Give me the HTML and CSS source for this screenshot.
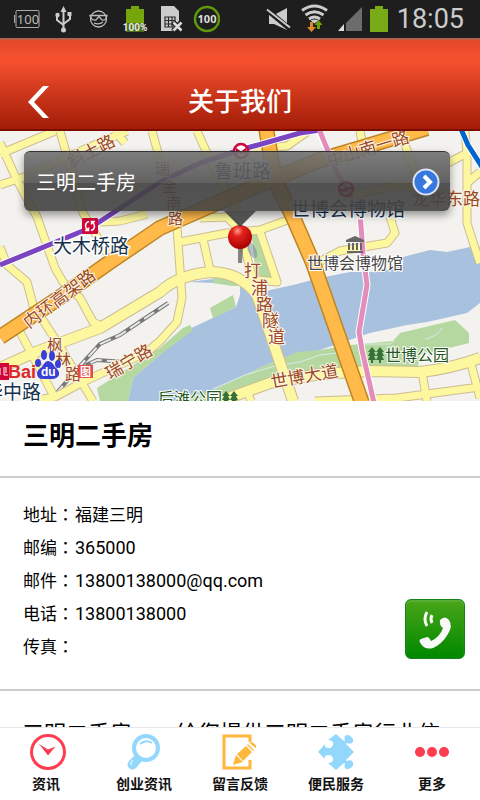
FILE: index.html
```html
<!DOCTYPE html>
<html lang="zh-CN">
<head>
<meta charset="utf-8">
<meta name="viewport" content="width=device-width, initial-scale=1">
<title>关于我们</title>
<link rel="stylesheet" href="styles.css">
</head>
<body>

<div class="status">
    <svg class="status-icons" width="212" height="38" viewBox="8 0 212 38">
        <g fill="none" stroke="#aaa">
            <rect x="16" y="10.500" width="23" height="17" rx="1"/>
            <path d="M14.500 15v8"/>
        </g>
        <text x="28" y="24" class="st-num" font-size="13" fill="#bbb">100</text>
        <g stroke="#ccc" stroke-width="2" fill="none">
            <path d="M63.500 10v21M57 16v4l6.500 5M70 15v4l-6.500 5"/>
        </g>
        <g fill="#ccc"><path d="M63.500 6l-3 6h6z"/><circle cx="63.500" cy="30" r="2.500"/><circle cx="57.500" cy="15" r="2.200"/><path d="M67.500 12h4v4h-4z"/></g>
        <g fill="none" stroke="#bbb" stroke-width="1.300">
            <circle cx="98.500" cy="19" r="8"/>
            <path d="M90 15.500h17l-1 3q-1 2-4 1.500l-3-3.500-3 3.500q-4 .5-5-2zM94 23q5 2 9-1"/>
        </g>
        <path d="M126 9h5V6h8v3h5v23h-18z" fill="#76a60b"/>
        <path d="M126 23h18v9h-18z" fill="#4c6c14"/>
        <text x="135" y="31" class="st-num narrow" font-size="10" font-weight="bold" fill="#e8e8e8">100%</text>
        <path d="M161 6h13l5 5v10l-4 4 2 6h-16z" fill="#ccc"/>
        <path d="M165 17h10v10h-10zM168.500 17v10M172 17v10M165 20.500h10M165 24h10" fill="none" stroke="#292929" stroke-width="1.200"/>
        <path d="M173 22l9 9M182 22l-9 9" stroke="#222" stroke-width="5"/>
        <path d="M173.500 22.500l8 8M181.500 22.500l-8 8" stroke="#ddd" stroke-width="2.500"/>
        <circle cx="207" cy="19" r="12" fill="none" stroke="#5f990a" stroke-width="2.500"/>
        <text x="207" y="23" class="st-num" font-size="11" font-weight="bold" fill="#ddd">100</text>
    </svg>
    <svg class="status-icons" width="126" height="38" viewBox="266 0 126 38">
        <path d="M270 15h5l13-7v22l-13-6h-5z" fill="#ccc"/>
        <path d="M267 9l24 20" stroke="#1e1e1e" stroke-width="5"/>
        <path d="M268 9.500l23 18" stroke="#ccc" stroke-width="2"/>
        <g fill="none" stroke="#ccc" stroke-width="3"><path d="M303 10.500q12.500-9 25 0M306.500 15q9-6.500 18 0M310 19q5.500-4 11 0"/></g>
        <path d="M311.500 20.500q4-2 8 0l-4 3z" fill="#ccc"/>
        <path d="M311 22h3v5h3l-4.500 5-4.500-5h3z" fill="#dd8b28"/>
        <path d="M319.500 20l4 5H321v4h-3v-4h-2.500z" fill="#69a20a"/>
        <path d="M339 31l6-7v7z" fill="#ddd"/>
        <path d="M347 31V23l16-16v24z" fill="#6c6c6c"/>
        <path d="M371 9h5V6h8v3h5v23h-18z" fill="#79ab17"/>
    </svg>
    <time class="clock">18:05</time>
</div>

<header class="header">
    <button class="back" aria-label="返回">
        <svg width="24" height="34" viewBox="0 0 24 34"><path d="M17 1h6L8 17l15 16h-6L2 17z" fill="#fff"/></svg>
    </button>
    <h1>关于我们</h1>
</header>

<main>
<section class="map">
    <svg class="map-canvas" viewBox="0 131 480 270" preserveAspectRatio="xMidYMid slice">
        <defs>
            <radialGradient id="pin" cx=".4" cy=".25" r=".75">
                <stop offset="0" stop-color="#ff9a90"/><stop offset=".3" stop-color="#e5221c"/><stop offset="1" stop-color="#a60000"/>
            </radialGradient>
            <!-- ordinary streets, drawn twice: edge then fill -->
            <g id="streets">
                <path d="M0 154L55 131M0 185L27 176L83 150L127 131M0 143L17 180L37 217L55 268L63 282L80 298L93 322L105 328"/>
                <path d="M0 247L7 265L27 282L33 305L57 342L93 401M20 332L55 398M60 131L83 213L107 253M100 222L120 221L147 214M115 131L125 143M152 131L160 160"/>
                <path d="M197 131L210 160L237 210M307 132L287 146L247 150M170 190L177 227L182 298L177 322L160 341L147 352L83 382L55 397L30 401"/>
                <path d="M180 242L227 233L260 230L293 218M203 239L210 270M260 232L273 270L277 282L257 280M200 218L227 217L240 230L257 295"/>
                <path d="M360 131L363 147M400 131L417 177M315 264L340 251L387 243L395 233L390 217M340 197L400 185L450 195"/>
                <path d="M465 131L467 153L467 223L474 245L480 263M448 163L467 153M467 183L480 172M422 372L427 401M470 360L480 398M315 401L397 398L480 387M248 393L251 401"/>
            </g>
            <g id="avenues">
                <path d="M0 368L33 353L100 328L160 292Q178 275 210 272Q240 272 257 295L273 342L293 401"/>
                <path d="M220 401L270 383L320 374L370 371L420 372Q450 369 480 358"/>
            </g>
            <g id="highway">
                <path d="M0 337L53 302L110 262L160 228L247 190L320 160L427 128"/>
                <path d="M266 128L275 180L293 217L313 263L362 403"/>
            </g>
        </defs>
        <rect x="0" y="131" width="480" height="270" fill="#f3f2ef"/>
        <path fill="#a8c1df" d="M188 282L213 283L240 285L240 295L236 307L183 332L160 355L133 378L128 401H190L213 390L273 362L320 350L370 333L407 325L427 322L467 313L480 303V247H470L447 252L430 250L403 257V265L380 272H350L320 278L293 285L270 290L253 298L240 285L213 279Z"/>
        <g fill="#b5d8a0">
            <path d="M160 348L97 388L100 401H128L133 378L160 355L193 330L190 325L183 328Z"/>
            <path d="M213 272L235 276L248 286L232 286L213 283ZM210 308L233 295L236 307L213 318ZM251 230L257 233L271 278L257 284Z"/>
            <path d="M190 398L213 390L273 362L297 352L320 350L350 345L393 341L400 333L455 320L469 333V343L420 355L418 367L340 372L270 382L235 393L228 401H190Z"/>
        </g>
        <path d="M213 389L245 375L275 366L300 362L320 355L345 352M364 344H390L394 341M425 339Q438 336 442 328" fill="none" stroke="#dbe9ec"/>
        <path d="M55 395L78 368L100 344L120 335L168 303M75 370L97 360L125 362" fill="none" stroke="#777" stroke-width="4"/>
        <path d="M55 395L78 368L100 344L120 335L168 303M75 370L97 360L125 362" fill="none" stroke="#e8e8e8" stroke-width="2" stroke-dasharray="12 5"/>
        <use href="#streets" class="street-edge"/>
        <use href="#avenues" class="avenue-edge"/>
        <use href="#streets" class="street"/>
        <use href="#avenues" class="avenue"/>
        <use href="#highway" class="highway-edge"/>
        <use href="#highway" class="highway"/>
        <path class="metro-edge" d="M0 265L90 228L125 205L160 182L200 163L240 150L300 133L320 130M319 131L337 173L360 213L363 253L367 285L359 332L362 350L374 403M461 129L468 145L482 167"/>
        <path class="metro" stroke="#7b45c2" d="M0 265L90 228L125 205L160 182L200 163L240 150L300 133L320 130"/>
        <path class="metro" stroke="#e28dbb" d="M319 129L337 173L360 213L363 253L367 285L359 332L362 350L374 403"/>
        <path class="metro" stroke="#0065cf" d="M461 129L468 145L482 167"/>

        <g class="road-name">
            <text transform="translate(29 329) rotate(-37)" font-size="17">内环高架路</text>
            <text transform="translate(110 380) rotate(-31)" font-size="17">瑞宁路</text>
            <text transform="translate(272 388) rotate(-10)" font-size="17">世博大道</text>
            <text transform="translate(329 167) rotate(-17)" font-size="17">中山南一路</text>
            <text transform="translate(71 168) rotate(-27)" font-size="17">斜土路</text>
            <text x="412" y="205" font-size="17">龙华东路</text>
            <text x="47" y="351" font-size="16">枫</text><text x="55" y="366" font-size="16">林</text><text x="65" y="380" font-size="16">路</text>
            <text x="244" y="277" font-size="17">打</text><text x="251" y="294" font-size="17">浦</text><text x="256" y="311" font-size="17">路</text><text x="262" y="327" font-size="17">隧</text><text x="268" y="343" font-size="17">道</text>
            <text x="155" y="174" font-size="15">瑞</text><text x="162" y="192" font-size="15">金</text><text x="166" y="208" font-size="15">南</text><text x="168" y="224" font-size="15">路</text>
        </g>
        <g class="station-name">
            <text x="53" y="253" font-size="19">大木桥路</text>
            <text x="214" y="178" font-size="19">鲁班路</text>
            <text x="291" y="216" font-size="19">世博会博物馆</text>
            <text x="-16" y="399" font-size="19">华中路</text>
        </g>
        <g class="place-name">
            <text x="307" y="269" font-size="16">世博会博物馆</text>
            <text x="385" y="361" font-size="16" fill="#245820">世博公园</text>
            <text x="158" y="404" font-size="16" fill="#245820">后滩公园</text>
        </g>
        <g fill="#36713a">
            <path id="tree" d="M372 347l4 5h-2l2 4h-2l2 4h-3v3h-2v-3h-3l2-4h-2l2-4h-2z"/>
            <use href="#tree" x="8"/><use href="#tree" x="-146" y="44"/><use href="#tree" x="-138" y="44"/>
        </g>
        <path d="M355 236l9 4v2h-18v-2zM348 243h2v7h-2zM352 243h2v7h-2zM356 243h2v7h-2zM360 243h2v7h-2zM347 251h16v2h-16z" fill="#666"/>
        <g>
            <rect x="82" y="218" width="16" height="16" rx="1" fill="#d0063a"/>
            <path d="M89 221.500q-3.500 1-3.500 4.500 0 2.500 2.500 4M85 230.500h3.500v-3M91 230.500q3.500-1 3.500-4.500 0-2.500-2.500-4M95 221.500h-3.500v3" stroke="#fff" stroke-width="1.500" fill="none"/>
        </g>
        <g fill="none" stroke="#d0063a" stroke-width="2.500">
            <circle cx="241" cy="151" r="7" fill="#fff"/><path d="M237 154v-4l4 3 4-3v4"/>
            <circle cx="346" cy="189" r="7"/><path d="M339 189l5 2 3-3 6 1"/>
        </g>

        <!-- map provider mark -->
        <g class="provider">
            <rect x="-6" y="363" width="15" height="17" fill="#d0063a"/>
            <path d="M0 368v7M4 367v8h4M6 367v6" stroke="#fff" fill="none"/>
            <text x="8" y="378" font-size="18" fill="#e02826">Bai</text>
            <rect x="78" y="365" width="15" height="13" fill="#e64b4b"/>
            <text x="80" y="376" font-size="11" fill="#fff">图</text>
            <g fill="#3a3fd8">
                <ellipse cx="38" cy="363" rx="3" ry="4"/><ellipse cx="44" cy="355" rx="3" ry="5"/><ellipse cx="52" cy="356" rx="3" ry="5"/><ellipse cx="58" cy="364" rx="3" ry="4"/>
                <path d="M48 361q4 0 7 6 5 4 4 8-2 4-7 4H43q-6 0-6-6 1-4 5-6 3-6 6-6z"/>
            </g>
            <text x="41" y="376" font-size="12" fill="#fff">du</text>
        </g>

        <path d="M238 248h5l-1 15h-4z" fill="#555" opacity=".7"/>
        <ellipse cx="252" cy="250" rx="4" ry="9" transform="rotate(-25 252 250)" fill="#60749b" opacity=".4"/>
        <circle cx="240" cy="237" r="12" fill="url(#pin)"/>
    </svg>
    <button class="callout">
        <span>三明二手房</span>
        <svg width="28" height="28" viewBox="0 0 28 28">
            <circle cx="14" cy="14" r="12.500" fill="#3778df" stroke="#dce6f4" stroke-width="2"/>
            <path d="M12 8l6 6-6 6" fill="none" stroke="#fff" stroke-width="4"/>
        </svg>
    </button>
</section>

<h2 class="company">三明二手房</h2>

<section class="contact">
    <dl>
        <div><dt>地址<i lang="zh-TW">：</i></dt><dd>福建三明</dd></div>
        <div><dt>邮编<i lang="zh-TW">：</i></dt><dd class="latin">365000</dd></div>
        <div><dt>邮件<i lang="zh-TW">：</i></dt><dd class="latin">13800138000@qq.com</dd></div>
        <div><dt>电话<i lang="zh-TW">：</i></dt><dd class="latin">13800138000</dd></div>
        <div><dt>传真<i lang="zh-TW">：</i></dt><dd></dd></div>
    </dl>
    <button class="call" aria-label="拨打电话">
        <svg width="60" height="60" viewBox="0 0 60 60">
            <path d="M35 21q5-5 9 0 4 6-1 14-6 10-15 14-8 2-12-4-3-4 0-5l6-2q2 0 4 4 9-4 12-13-4-3-3-8z" fill="#fafafa"/>
            <path d="M22 13q-4 7 0 14M27 16q-2 4 0 8" fill="none" stroke="#f4faf2" stroke-width="3"/>
        </svg>
    </button>
</section>

<p class="intro">三明二手房——给您提供三明二手房行业信</p>
</main>

<nav class="tabs">
    <a href="#news">
        <svg width="36" height="36" viewBox="0 0 36 36"><circle cx="18" cy="18" r="16.500" fill="none" stroke="#ff3b4f" stroke-width="3"/><path d="M9 10l9 5.500 7.500-3-7.500 9z" fill="#ff3b4f"/></svg>
        <span>资讯</span>
    </a>
    <a href="#startup">
        <svg width="36" height="36" viewBox="0 0 36 36"><circle cx="20" cy="14" r="12" fill="none" stroke="#93d8fc" stroke-width="4"/><path d="M14 10q6-5 12-1" fill="none" stroke="#93d8fc" stroke-width="2"/><path d="M9 21l7 6-6 7q-4 3-7 0-3-3 0-7z" fill="#93d8fc"/><path d="M5 31q-1-3 2-5" fill="none" stroke="#fff"/></svg>
        <span>创业资讯</span>
    </a>
    <a href="#feedback">
        <svg width="36" height="36" viewBox="0 0 36 36"><path d="M28 8V2H2v32h26v-8" fill="none" stroke="#feb83c" stroke-width="3"/><path d="M11 31l3-10 7 7zM15 20l9-8 6 6-9 9zM25 11l1-1 6 6-1 1zM27.500 9q3-2 5 1 3 2 1 4z" fill="#feb83c"/></svg>
        <span>留言反馈</span>
    </a>
    <a href="#service">
        <svg width="36" height="36" viewBox="0 0 36 36"><path d="M0 18l7-8v3q6 3 8-2 1-5-5-5l8-6 8 7 1-1q-2-5 3-5 6 2 5 7-2 3-6 1l-1 1 8 8-8 8 1 1q4-2 6 1 1 6-5 7-5 0-3-5l-1-1-8 7-8-7q6 0 5-5-2-5-8-2v3z" fill="#93d8fc"/></svg>
        <span>便民服务</span>
    </a>
    <a href="#more">
        <svg width="36" height="36" viewBox="0 0 36 36"><g fill="#ff3b4f"><circle cx="6" cy="18" r="5"/><circle cx="18" cy="18" r="5"/><circle cx="30" cy="18" r="5"/></g></svg>
        <span>更多</span>
    </a>
</nav>

</body>
</html>
```
FILE: styles.css
```css
* {box-sizing:border-box}
body {margin:0;height:100vh;display:flex;flex-direction:column;background:#fff;color:#000;font-family:Roboto,"Noto Sans CJK SC",sans-serif}
button {border:0;padding:0;background:none;font-family:inherit;cursor:pointer}
svg {display:block}

.status {flex:none;display:flex;align-items:center;height:38px;padding:0 16px 0 8px;background:#1e1e1e}
.status-icons + .status-icons {margin-left:auto}
.st-num {font-family:"Noto Sans",sans-serif;text-anchor:middle}
.narrow {font-family:Roboto,sans-serif}
.clock {margin-left:6px;color:#ccc;font-size:27px;line-height:38px}

.header {flex:none;display:grid;grid-template-columns:76px 1fr 76px;align-items:center;height:93px;padding-top:34px;border-top:2px solid #b5604c;border-bottom:2px solid #7a0c00;background:linear-gradient(#e2482b,#f4502e 18%,#f4502e 24%,#a21c07)}
.back {justify-self:center}
h1 {margin:0;color:#fff;text-align:center;font-size:26px;font-weight:500;line-height:40px}

main {flex:1;min-height:0;overflow:hidden}

.map {position:relative}
.map-canvas {width:100%;height:270px}
.map-canvas use, .metro, .metro-edge {fill:none;stroke-linejoin:round}
.map-canvas .street-edge {stroke:#cdbd93;stroke-width:9px}
.map-canvas .street {stroke:#fdf8a0;stroke-width:7px}
.map-canvas .avenue-edge {stroke:#cdbd93;stroke-width:12px}
.map-canvas .avenue {stroke:#fdf8a0;stroke-width:10px}
.map-canvas .highway-edge {stroke:#bd8526;stroke-width:16px}
.map-canvas .highway {stroke:#ffba49;stroke-width:13px}
.map-canvas use[href="#tree"] {fill:inherit}
.metro-edge {stroke:#fff;stroke-width:7px}
.metro {stroke-width:5px}
.road-name, .station-name, .place-name {paint-order:stroke;stroke:#fbf6e8;stroke-width:2px}
.road-name {fill:#9b4924}
.station-name {fill:#16324f;stroke:#fff;stroke-width:3px}
.place-name {fill:#474747;stroke:#fff}
.provider {font-family:"Liberation Sans","Noto Sans CJK SC",sans-serif;font-weight:bold}

.callout {position:absolute;top:20px;left:24px;right:30px;display:flex;align-items:center;justify-content:space-between;height:60px;padding:0 10px 0 12px;border-top:1px solid #333;border-radius:6px;background:linear-gradient(rgba(112,112,112,.9),rgba(82,82,82,.9) 52%,rgba(64,64,64,.9) 53%,rgba(66,66,66,.9));box-shadow:0 4px 8px rgba(0,0,0,.4);color:#fff;font-size:20px}
.callout::after {content:"";position:absolute;top:100%;left:calc(50% - 13px);border:16px solid transparent;border-top-color:rgba(66,66,66,.9);border-bottom:0}

.company {margin:0;padding:15px 23px 19px;border-bottom:2px solid #ccc;font-size:26px;font-weight:700;line-height:41px}

.contact {display:flex;justify-content:space-between;align-items:flex-end;padding:19px 15px 27px 23px;border-bottom:2px solid #ccc}
dl {margin:0;font-size:17px;line-height:33px}
dl div {display:flex;align-items:baseline;gap:1px;height:33px}
dd {margin:0}
i {font-family:"Noto Sans CJK TC",sans-serif;font-style:normal}
.latin {font-size:18px}
.call {margin-bottom:3px;border:1px solid #17831a;border-radius:6px;background:linear-gradient(#4aa518,#008800);box-shadow:inset 0 2px 1px #58ae37;width:60px;height:60px}
.call svg {margin:-1px}

.intro {margin:0;padding:23px 22px;font-family:"Noto Sans CJK SC",sans-serif;font-size:22px;line-height:34px}

.tabs {flex:none;display:grid;grid-template-columns:repeat(5,1fr);height:73px;padding-top:6px;border-top:1px solid #e8e8e8;background:#fff}
.tabs a {display:flex;flex-direction:column;align-items:center;gap:4px;color:#111;text-decoration:none;font-size:14px;font-weight:700;line-height:20px;white-space:nowrap}
.tabs a:nth-child(1) span {padding-right:4px}
```
